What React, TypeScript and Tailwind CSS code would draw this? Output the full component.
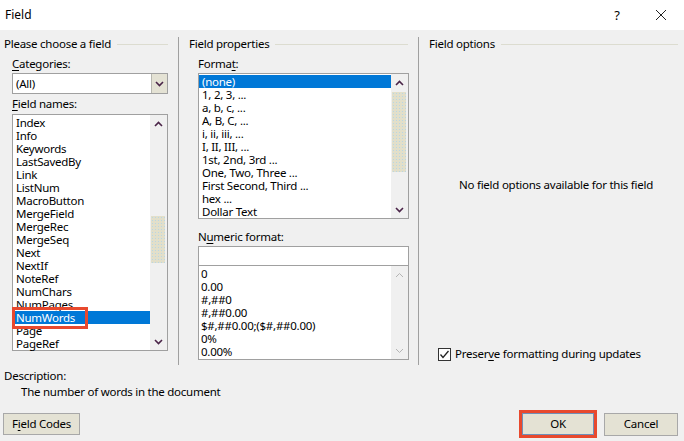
import React from "react";

const Chevron = ({ dir, gray }: { dir: "up" | "down"; gray?: boolean }) => (
  <svg width="9" height="6" viewBox="0 0 9 6" className="block">
    <polyline
      points={dir === "up" ? "1,5 4.5,1.5 8,5" : "1,1 4.5,4.5 8,1"}
      fill="none"
      stroke={gray ? "#b4b4b4" : "#4a2448"}
      strokeWidth={gray ? 1 : 1.6}
    />
  </svg>
);

const U = ({ children }: { children: React.ReactNode }) => (
  <span className="underline underline-offset-[2px]">{children}</span>
);

const Thumb = ({ top, h }: { top: number; h: number }) => (
  <div
    className="absolute left-[1px] right-[2px] bg-[#e2dfca] bg-[radial-gradient(#b9d6e4_0.6px,transparent_0.8px)] bg-[length:3px_3px]"
    style={{ top, height: h }}
  />
);

const GroupHeader = ({ title, pl, pr }: { title: string; pl: string; pr: string }) => (
  <div className={`flex items-center h-[14px] ${pl} ${pr}`}>
    <span className="whitespace-nowrap">{title}</span>
    <div className="flex-1 h-px bg-[#dcdcd0] ml-[6px]" />
  </div>
);

const fieldNames = [
  "Index", "Info", "Keywords", "LastSavedBy", "Link", "ListNum", "MacroButton", "MergeField",
  "MergeRec", "MergeSeq", "Next", "NextIf", "NoteRef", "NumChars", "NumPages", "NumWords", "Page", "PageRef",
];

const formats = [
  "(none)", "1, 2, 3, ...", "a, b, c, ...", "A, B, C, ...", "i, ii, iii, ...", "I, II, III, ...",
  "1st, 2nd, 3rd ...", "One, Two, Three ...", "First Second, Third ...", "hex ...", "Dollar Text",
];

const numFormats = ["0", "0.00", "#,##0", "#,##0.00", "$#,##0.00;($#,##0.00)", "0%", "0.00%"];

export default function App() {
  return (
    <div className="w-[684px] h-[441px] bg-[#f0f0f0] text-[11.5px] tracking-[-0.25px] leading-[14px] text-black font-['Segoe_UI','Noto_Sans',sans-serif] overflow-hidden">
      {/* Title bar */}
      <div className="h-[30px] bg-white flex items-center pl-[5px] pr-[17px]">
        <span className="text-[12px] tracking-normal">Field</span>
        <div className="flex-1" />
        <span className="w-[10px] text-center text-[13px]">?</span>
        <div className="w-[33px]" />
        <svg width="12" height="12" viewBox="0 0 12 12">
          <path d="M1 1 L11 11 M11 1 L1 11" stroke="#222" strokeWidth="1" fill="none" />
        </svg>
      </div>

      {/* Main three columns */}
      <div className="flex mt-[7px] h-[328px]">
        {/* Left column */}
        <div className="w-[178px] flex flex-col">
          <GroupHeader title="Please choose a field" pl="pl-[4px]" pr="pr-[10px]" />
          <div className="pl-[12px] pr-[10px] flex flex-col">
            <div className="mt-[6px] h-[14px]">
              <U>C</U>ategories:
            </div>
            <div className="mt-[2px] h-[21px] bg-white border border-[#a0a0a0] flex items-center">
              <span className="flex-1 pl-[3px]">(All)</span>
              <div className="w-[16px] h-[19px] bg-[#e4e2d4] border-l border-[#b8b8b0] flex items-center justify-center">
                <Chevron dir="down" />
              </div>
            </div>
            <div className="mt-[3px] h-[14px]">
              <U>F</U>ield names:
            </div>
            <div className="mt-[3px] h-[237px] bg-white border border-[#a0a0a0] flex">
              <div className="flex-1 py-[1px] flex flex-col">
                {fieldNames.map((n) => (
                  <div
                    key={n}
                    className={`h-[13px] leading-[13px] pl-[3px] whitespace-nowrap relative ${
                      n === "NumWords" ? "bg-[#0078d7] text-white" : ""
                    }`}
                  >
                    {n === "NumWords" ? (
                      <>
                        <span className="relative z-10">{n}</span>
                        <div className="absolute left-[-1px] top-[-4px] w-[76px] h-[22px] border-[3px] border-[#e8492e] z-20" />
                      </>
                    ) : (
                      n
                    )}
                  </div>
                ))}
              </div>
              <div className="w-[17px] bg-[#f0f0f0] relative">
                <div className="h-[17px] flex items-center justify-center">
                  <Chevron dir="up" />
                </div>
                <Thumb top={101} h={47} />
                <div className="absolute bottom-0 left-0 right-0 h-[17px] flex items-center justify-center">
                  <Chevron dir="down" />
                </div>
              </div>
            </div>
          </div>
        </div>

        <div className="w-px bg-[#a0a0a0]" />

        {/* Middle column */}
        <div className="w-[239px] flex flex-col">
          <GroupHeader title="Field properties" pl="pl-[10px]" pr="pr-[10px]" />
          <div className="pl-[19px] pr-[9px] flex flex-col">
            <div className="mt-[6px] h-[14px]">
              Forma<U>t</U>:
            </div>
            <div className="mt-[2px] h-[146px] bg-white border border-[#a0a0a0] flex">
              <div className="flex-1 py-[1px] flex flex-col">
                {formats.map((f) => (
                  <div
                    key={f}
                    className={`h-[13px] leading-[13px] pl-[3px] whitespace-nowrap ${
                      f === "(none)" ? "bg-[#0078d7] text-white" : ""
                    }`}
                  >
                    {f}
                  </div>
                ))}
              </div>
              <div className="w-[17px] bg-[#f0f0f0] relative">
                <div className="h-[17px] flex items-center justify-center">
                  <Chevron dir="up" />
                </div>
                <Thumb top={18} h={80} />
                <div className="absolute bottom-0 left-0 right-0 h-[17px] flex items-center justify-center">
                  <Chevron dir="down" />
                </div>
              </div>
            </div>
            <div className="mt-[11px] h-[14px]">
              N<U>u</U>meric format:
            </div>
            <div className="mt-[2px] h-[20px] bg-white border border-[#a0a0a0]" />
            <div className="h-[94px] bg-white border border-t-0 border-[#a0a0a0] flex">
              <div className="flex-1 pt-[1px] flex flex-col">
                {numFormats.map((f) => (
                  <div key={f} className="h-[13px] leading-[13px] pl-[2px] whitespace-nowrap">
                    {f}
                  </div>
                ))}
              </div>
              <div className="w-[17px] bg-[#f0f0f0] relative">
                <div className="h-[17px] flex items-center justify-center">
                  <Chevron dir="up" gray />
                </div>
                <div className="absolute bottom-0 left-0 right-0 h-[17px] flex items-center justify-center">
                  <Chevron dir="down" gray />
                </div>
              </div>
            </div>
          </div>
        </div>

        <div className="w-px bg-[#a0a0a0]" />

        {/* Right column */}
        <div className="flex-1 flex flex-col">
          <GroupHeader title="Field options" pl="pl-[10px]" pr="pr-[6px]" />
          <div className="mt-[127px] h-[14px] pl-[40px] whitespace-nowrap">
            No field options available for this field
          </div>
          <div className="mt-[155px] flex items-center pl-[19px] h-[14px]">
            <div className="w-[13px] h-[13px] bg-white border border-[#333] flex items-center justify-center">
              <svg width="11" height="11" viewBox="0 0 11 11">
                <polyline points="1.5,5.5 4,8.5 9.5,2" fill="none" stroke="#222" strokeWidth="1.3" />
              </svg>
            </div>
            <span className="ml-[4px] whitespace-nowrap">
              Preser<U>v</U>e formatting during updates
            </span>
          </div>
        </div>
      </div>

      {/* Description */}
      <div className="mt-[4px] h-[14px] pl-[4px]">Description:</div>
      <div className="mt-[2px] h-[14px] pl-[21px]">The number of words in the document</div>

      {/* Buttons */}
      <div className="mt-[11px] h-[28px] flex items-center pl-[3px] pr-[6px]">
        <div className="w-[77px] h-[22px] bg-[#e4e2d4] border border-[#a8a8a8] flex items-center justify-center">
          F<U>i</U>eld Codes
        </div>
        <div className="flex-1" />
        <div className="w-[78px] h-[28px] border-[3px] border-[#e8492e] flex">
          <div className="flex-1 bg-[#e4e2d4] border border-[#6f8fb8] flex items-center justify-center">
            OK
          </div>
        </div>
        <div className="ml-[7px] w-[74px] h-[23px] bg-[#e4e2d4] border border-[#a8a8a8] flex items-center justify-center">
          Cancel
        </div>
      </div>
    </div>
  );
}
